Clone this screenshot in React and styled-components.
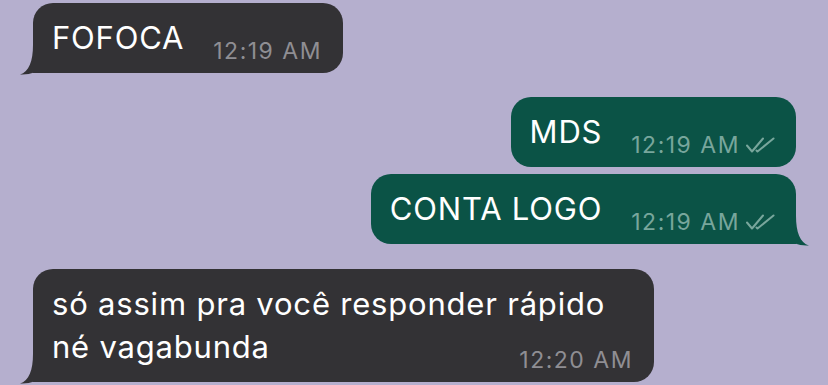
import React from 'react';
import styled, { createGlobalStyle } from 'styled-components';

const GlobalStyle = createGlobalStyle`
  html, body {
    margin: 0;
    padding: 0;
    background: #b5afce;
    overflow: hidden;
  }
  body {
    font-family: Inter, "Liberation Sans", sans-serif;
    -webkit-font-smoothing: antialiased;
  }
`;

const Chat = styled.div`
  display: flex;
  flex-direction: column;
  width: 828px;
  height: 385px;
  padding: 3px 32px 0 33px;
  box-sizing: border-box;
`;

const Row = styled.div`
  display: flex;
  justify-content: ${(p) => (p.$out ? 'flex-end' : 'flex-start')};
  margin-top: ${(p) => p.$gap || 0}px;
`;

const Bubble = styled.div`
  position: relative;
  display: flex;
  flex-wrap: wrap;
  align-items: flex-end;
  column-gap: 29px;
  max-width: 621px;
  box-sizing: border-box;
  padding: 13px 21px 14px 19px;
  border-radius: 20px;
  background: ${(p) => (p.$out ? '#0b5346' : '#333235')};
  ${(p) => p.$tail && (p.$out ? 'border-bottom-right-radius: 0;' : 'border-bottom-left-radius: 0;')}
`;

const Text = styled.span`
  color: #ffffff;
  font-size: 31px;
  line-height: 43px;
  letter-spacing: 0.8px;
`;

const Meta = styled.span`
  display: flex;
  align-items: center;
  gap: 6px;
  margin-left: auto;
  margin-bottom: -3px;
  margin-top: ${(p) => (p.$under ? '-22px' : '0')};
  font-size: 23px;
  line-height: 22px;
  letter-spacing: 1.5px;
  white-space: nowrap;
  color: ${(p) => (p.$out ? '#78a69c' : '#8f8e93')};
`;

const Tail = styled.svg`
  position: absolute;
  bottom: -2px;
  ${(p) => (p.$out ? 'right: -14px; transform: scaleX(-1);' : 'left: -14px;')}
  width: 30px;
  height: 30px;
  overflow: visible;
`;

const Checks = () => (
  <svg width="29" height="16" viewBox="0 0 29 16" fill="none">
    <path d="M1 8.5 L6 14.5 L17 1.5" stroke="#78a69c" strokeWidth="2" strokeLinecap="round" strokeLinejoin="round" />
    <path d="M10.5 13.5 L11.5 14.5 L27.5 1.5" stroke="#78a69c" strokeWidth="2" strokeLinecap="round" strokeLinejoin="round" />
  </svg>
);

const Message = ({ out, tail, time, text, under, gap }) => (
  <Row $out={out} $gap={gap}>
    <Bubble $out={out} $tail={tail}>
      <Text>{text}</Text>
      <Meta $out={out} $under={under}>
        {time}
        {out && <Checks />}
      </Meta>
      {tail && (
        <Tail $out={out} viewBox="0 0 30 30">
          <path d="M14 0 C14 16 10 27 1 29.5 Q9 30 15 27.5 L30 28 L30 0 Z" fill={out ? '#0b5346' : '#333235'} />
        </Tail>
      )}
    </Bubble>
  </Row>
);

export default function App() {
  return (
    <>
      <GlobalStyle />
      <Chat>
        <Message text="FOFOCA" time="12:19 AM" tail />
        <Message out text="MDS" time="12:19 AM" gap={24} />
        <Message out text="CONTA LOGO" time="12:19 AM" tail gap={7} />
        <Message text="só assim pra você responder rápido né vagabunda" time="12:20 AM" tail under gap={25} />
      </Chat>
    </>
  );
}
